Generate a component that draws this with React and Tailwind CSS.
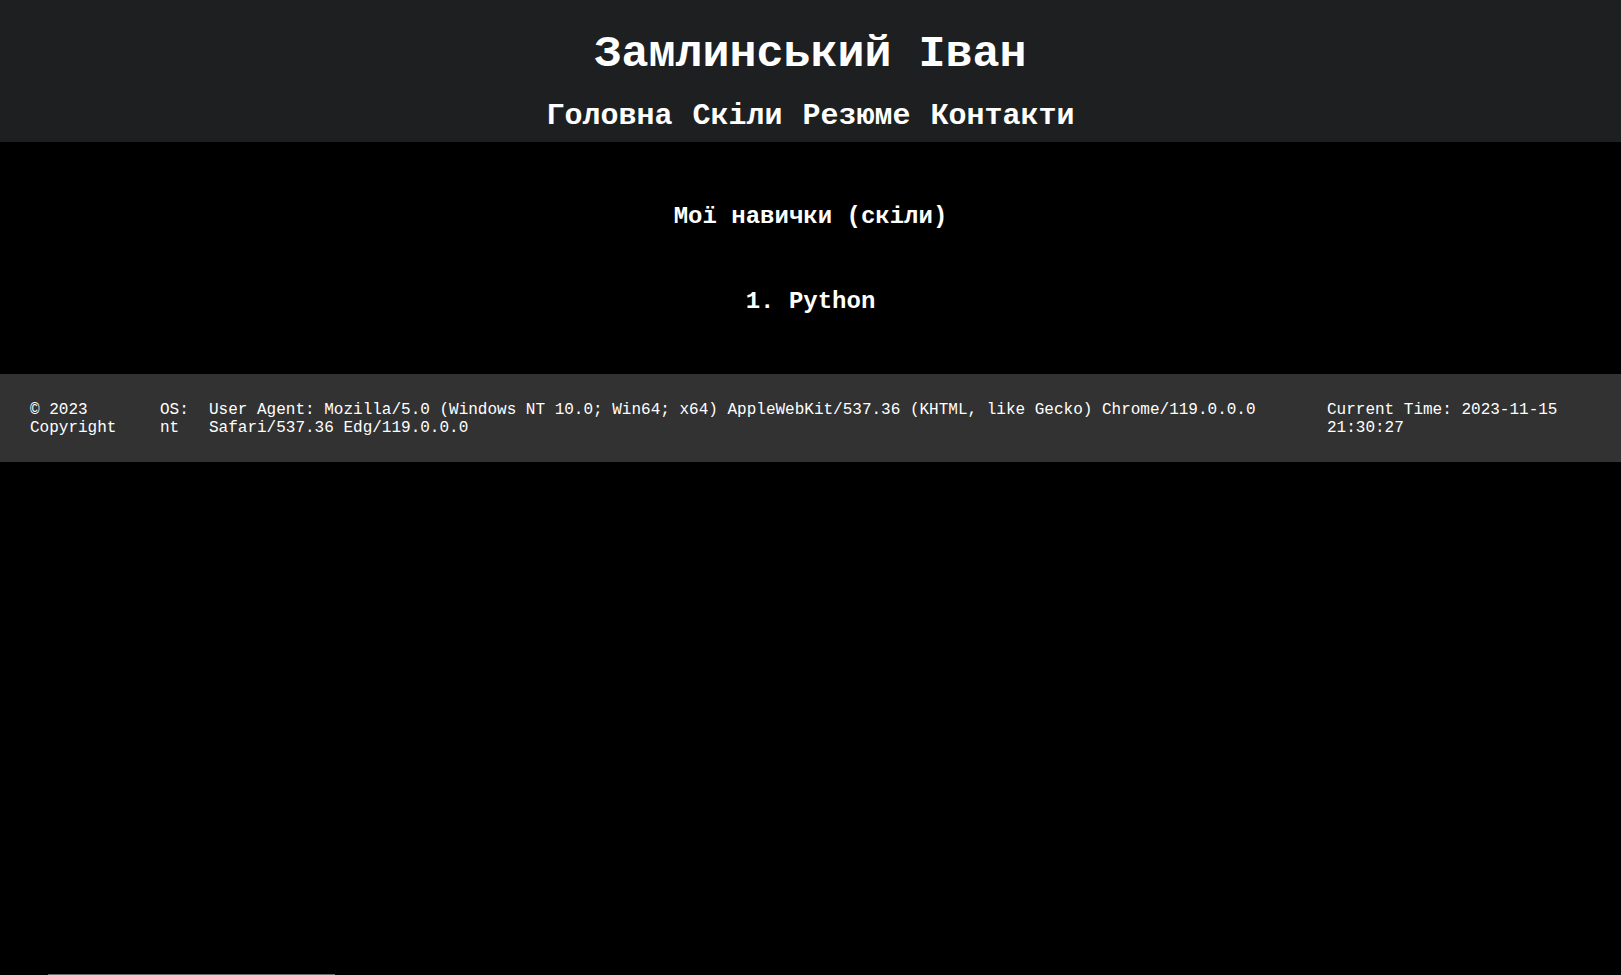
export default function App() {
  const mono = { fontFamily: '"Liberation Mono", "Courier New", monospace' };
  return (
    <div className="min-h-[975px] bg-black text-white" style={mono}>
      <header className="bg-[#1e1f21] pt-[30px] pb-[9px] text-center">
        <h1 className="text-[45px] leading-[50px] font-bold">Замлинський Іван</h1>
        <nav className="mt-[19px] text-[30px] leading-[34px] font-bold flex justify-center gap-[20px]">
          <a href="#">Головна</a>
          <a href="#">Скіли</a>
          <a href="#">Резюме</a>
          <a href="#">Контакти</a>
        </nav>
      </header>
      <main className="text-center font-bold text-[24px] leading-[28px] pt-[61px] pb-[58px]">
        <h2>Мої навички (скіли)</h2>
        <ol className="mt-[57px]">
          <li>1. Python</li>
        </ol>
      </main>
      <footer className="bg-[#323232] text-[16px] leading-[18px] pt-[27px] pb-[25px] pl-[30px] flex">
        <div className="w-[130px] shrink-0">© 2023<br />Copyright</div>
        <div className="w-[49px] shrink-0">OS:<br />nt</div>
        <div className="w-[1118px] shrink-0 pr-[60px]">
          User Agent: Mozilla/5.0 (Windows NT 10.0; Win64; x64) AppleWebKit/537.36 (KHTML, like Gecko) Chrome/119.0.0.0 Safari/537.36 Edg/119.0.0.0
        </div>
        <div className="w-[240px] shrink-0">Current Time: 2023-11-15<br />21:30:27</div>
      </footer>
      <div className="fixed bottom-0 left-[48px] w-[287px] h-px bg-[#6b6b6b]" />
    </div>
  );
}
